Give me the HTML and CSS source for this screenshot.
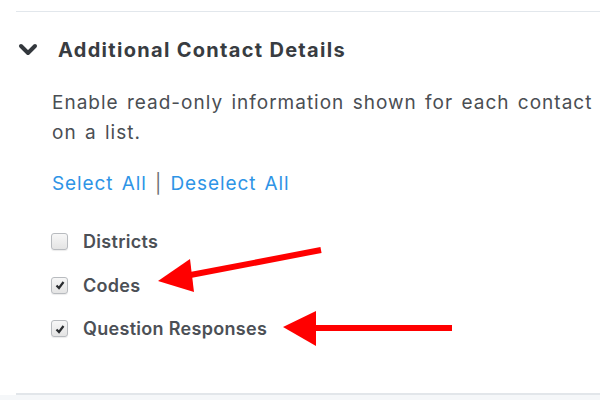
FILE: index.html
```html
<!DOCTYPE html>
<html lang="en">
<head>
<meta charset="UTF-8">
<title>Additional Contact Details</title>
<link rel="stylesheet" href="styles.css">
</head>
<body>
<div class="page">
  <div class="section">
    <div class="section-header">
      <svg class="chevron" width="20" height="14" viewBox="0 0 20 14">
        <polyline points="3,3 10,10 17,3" fill="none" stroke="#33383d" stroke-width="4" stroke-linecap="round" stroke-linejoin="round"/>
      </svg>
      <h2 class="section-title">Additional Contact Details</h2>
    </div>
    <div class="section-body">
      <p class="desc">Enable read-only information shown for each contact on a list.</p>
      <p class="links"><a href="#">Select All</a> <span class="sep">|</span> <a href="#">Deselect All</a></p>
      <ul class="options">
        <li class="option"><span class="box"></span>Districts</li>
        <li class="option"><span class="box checked"><svg width="12" height="12" viewBox="0 0 12 12"><polyline points="2.5,6.5 5,9 9.5,3" fill="none" stroke="#2a2d30" stroke-width="2.2"/></svg></span>Codes</li>
        <li class="option"><span class="box checked"><svg width="12" height="12" viewBox="0 0 12 12"><polyline points="2.5,6.5 5,9 9.5,3" fill="none" stroke="#2a2d30" stroke-width="2.2"/></svg></span>Question Responses</li>
      </ul>
    </div>
  </div>
  <div class="footer"></div>

  <!-- annotation arrows -->
  <svg class="arrows" width="600" height="400" viewBox="0 0 600 400">
    <line x1="321" y1="250" x2="180" y2="277" stroke="#ff0000" stroke-width="6"/>
    <polygon points="158,281 190,259 194,292" fill="#ff0000"/>
    <line x1="452" y1="328" x2="300" y2="328" stroke="#ff0000" stroke-width="6"/>
    <polygon points="283,327 316,311 316,346" fill="#ff0000"/>
  </svg>
</div>
</body>
</html>
```

FILE: styles.css
```css
body {
  margin: 0;
  background: #fff;
  font-family: Inter, "Liberation Sans", sans-serif;
  color: #45494e;
}

.page {
  position: relative;
  width: 600px;
  height: 400px;
  overflow: hidden;
}

.section {
  margin: 11px 0 0 16px;
  height: 381px;
  border-top: 1px solid #e2e7ec;
  border-bottom: 2px solid #e2e6ea;
}

.section-header {
  display: flex;
  align-items: center;
  height: 76px;
}

.chevron {
  margin-left: 2px;
  margin-right: 20px;
}

.section-title {
  margin: 0;
  font-size: 20px;
  font-weight: 700;
  color: #383c41;
  letter-spacing: 1.3px;
}

.section-body {
  padding-left: 36px;
}

.desc {
  margin: 0;
  font-size: 19px;
  line-height: 30px;
  letter-spacing: 1px;
  word-spacing: 2px;
  color: #4a4e53;
}

.links {
  margin: 21px 0 0;
  font-size: 19px;
  line-height: 30px;
  letter-spacing: 0.9px;
  word-spacing: 2px;
}

.links a {
  color: #2e94e6;
  text-decoration: none;
}

.sep {
  color: #6b6f74;
}

.options {
  list-style: none;
  margin: 21px 0 0;
  padding: 0;
}

.option {
  display: flex;
  align-items: center;
  height: 43.5px;
  font-size: 18px;
  font-weight: 600;
  letter-spacing: 0.3px;
  color: #4c5056;
}

.box {
  display: flex;
  align-items: center;
  justify-content: center;
  box-sizing: border-box;
  width: 17px;
  height: 17px;
  margin-left: -1px;
  margin-right: 15px;
  border: 1px solid #b8bbbf;
  border-radius: 3px;
  background: linear-gradient(#f7f7f7, #e4e4e4);
  box-shadow: 0 1px 1px rgba(0, 0, 0, 0.08);
}

.footer {
  height: 10px;
  background: #f5f7f9;
}

.arrows {
  position: absolute;
  left: 0;
  top: 0;
}
```
